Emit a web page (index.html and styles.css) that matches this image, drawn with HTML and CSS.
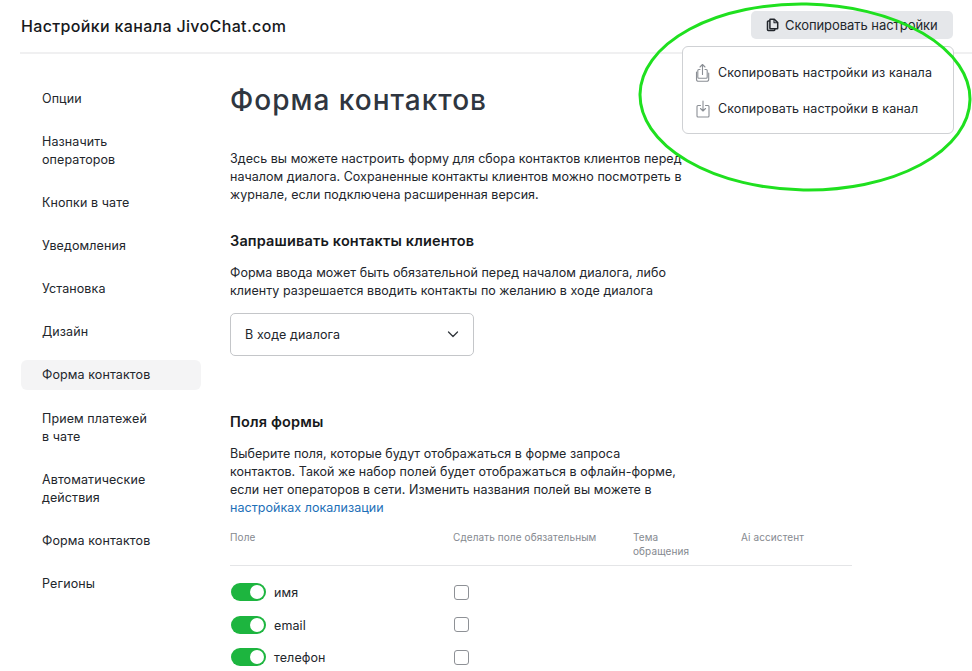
FILE: index.html
```html
<!DOCTYPE html>
<html lang="ru">
    <head>
        <meta charset="utf-8">
        <meta name="viewport" content="width=device-width, initial-scale=1.0">
        <title>Настройки канала</title>
        <link rel="stylesheet" href="styles.css">
    </head>
    <body>
        <div class="page">
            <header class="topbar">
                <div class="channelTitle">Настройки канала JivoChat.com</div>
                <button class="copyBtn" type="button">
                    <svg width="14" height="14" viewBox="0 0 14 14" fill="none" stroke="#22262c" stroke-width="1.5" stroke-linejoin="round">
                        <path d="M4 3H2.2a.7.7 0 0 0-.7.7v8.1c0 .4.3.7.7.7h5.9c.4 0 .7-.3.7-.7V11"/>
                        <path d="M4.5 1.2h3.8l3.4 3.4v5.6a.6.6 0 0 1-.6.6H4.500a.6.6 0 0 1-.6-.6V1.800c0-.3.300-.6.600-.6z"/>
                        <path d="M8 1.500v3.300h3.500" stroke-width="1.100"/>
                    </svg>
                    Скопировать настройки
                </button>
            </header>

            <div class="copyMenu">
                <div class="copyMenuItem">
                    <svg width="16" height="20" viewBox="0 0 16 20" fill="none" stroke="#8b8f95" stroke-width="1.100" stroke-linecap="round" stroke-linejoin="round">
                        <path d="M7.500 11.500V1.500M5 4l2.500-2.500L10 4"/>
                        <path d="M5 6.500H3.800c-.6 0-1 .4-1 1v6.800c0 .6.400 1 1 1h7.400c.6 0 1-.4 1-1V7.500c0-.6-.4-1-1-1H10"/>
                        <path d="M1.500 9v7.200c0 1.200.9 2.100 2.100 2.100h8c1.200 0 2.100-.9 2.100-2.100V10"/>
                    </svg>
                    <span>Скопировать настройки из канала</span>
                </div>
                <div class="copyMenuItem">
                    <svg width="16" height="20" viewBox="0 0 16 20" fill="none" stroke="#8b8f95" stroke-width="1.100" stroke-linecap="round" stroke-linejoin="round">
                        <path d="M8 2v10M5.500 9.500 8 12l2.500-2.500"/>
                        <path d="M5.500 6.500H3c-.6 0-1 .4-1 1V17c0 .6.400 1 1 1h10c.6 0 1-.4 1-1V7.500c0-.6-.4-1-1-1h-2.500"/>
                    </svg>
                    <span>Скопировать настройки в канал</span>
                </div>
            </div>

            <div class="layout">
                <nav class="sideNav">
                    <a class="navItem">Опции</a>
                    <a class="navItem">Назначить<br>операторов</a>
                    <a class="navItem">Кнопки в чате</a>
                    <a class="navItem">Уведомления</a>
                    <a class="navItem">Установка</a>
                    <a class="navItem">Дизайн</a>
                    <a class="navItem navItemActive">Форма контактов</a>
                    <a class="navItem">Прием платежей<br>в чате</a>
                    <a class="navItem">Автоматические<br>действия</a>
                    <a class="navItem">Форма контактов</a>
                    <a class="navItem">Регионы</a>
                </nav>

                <main class="content">
                    <h1>Форма контактов</h1>
                    <p class="intro">Здесь вы можете настроить форму для сбора контактов клиентов перед<br>началом диалога. Сохраненные контакты клиентов можно посмотреть в<br>журнале, если подключена расширенная версия.</p>

                    <h2>Запрашивать контакты клиентов</h2>
                    <p class="hint">Форма ввода может быть обязательной перед началом диалога, либо<br>клиенту разрешается вводить контакты по желанию в ходе диалога</p>
                    <div class="selectBox">
                        <span>В ходе диалога</span>
                        <svg width="12" height="7" viewBox="0 0 12 7" fill="none" stroke="#33373d" stroke-width="1.300" stroke-linecap="round" stroke-linejoin="round"><path d="M1.500 1 6 5.500 10.500 1"/></svg>
                    </div>

                    <h2 class="fieldsTitle">Поля формы</h2>
                    <p class="hint">Выберите поля, которые будут отображаться в форме запроса<br>контактов. Такой же набор полей будет отображаться в офлайн-форме,<br>если нет операторов в сети. Изменить названия полей вы можете в<br><a class="link">настройках локализации</a></p>

                    <div class="fieldsHead">
                        <div>Поле</div>
                        <div>Сделать поле обязательным</div>
                        <div>Тема<br>обращения</div>
                        <div>Ai ассистент</div>
                    </div>
                    <div class="fieldRow">
                        <div class="fieldName"><span class="toggle"></span><span class="fieldLabel">имя</span></div>
                        <span class="checkbox"></span>
                    </div>
                    <div class="fieldRow">
                        <div class="fieldName"><span class="toggle"></span><span class="fieldLabel">email</span></div>
                        <span class="checkbox"></span>
                    </div>
                    <div class="fieldRow">
                        <div class="fieldName"><span class="toggle"></span><span class="fieldLabel">телефон</span></div>
                        <span class="checkbox"></span>
                    </div>
                </main>
            </div>

            <svg class="scribble" width="340" height="200" viewBox="0 0 340 200" fill="none">
                <ellipse cx="173" cy="97" rx="165" ry="93" transform="rotate(1 173 97)" stroke="#1fe01f" stroke-width="3"/>
            </svg>
        </div>
    </body>
</html>
```

FILE: styles.css
```css
*{
    box-sizing: border-box;
}

body{
    margin: 0;
    background: #fff;
    color: #22262c;
    font-family: Inter, "Liberation Sans", sans-serif;
    font-size: 12.5px;
    line-height: 18px;
    letter-spacing: 0.1px;
}

.page{
    position: relative;
    height: 671px;
    overflow: hidden;
}

.topbar{
    display: flex;
    align-items: center;
    justify-content: space-between;
    height: 54px;
    margin-left: 20px;
    padding: 0 19px 2px 1px;
    border-bottom: 2px solid #f0f0f1;
}

.channelTitle{
    padding-top: 2px;
    font-size: 16px;
    font-weight: 500;
    letter-spacing: 0.35px;
    color: #17191c;
}

.copyBtn{
    display: flex;
    align-items: center;
    gap: 5px;
    width: 202px;
    height: 28px;
    padding: 0 0 0 15px;
    border: 0;
    border-radius: 5px;
    background: #e5e7ea;
    color: #22262c;
    font-family: inherit;
    font-size: 13px;
    letter-spacing: -0.05px;
}

.copyMenu{
    position: absolute;
    top: 46px;
    left: 682px;
    width: 272px;
    height: 88px;
    padding: 8px 0 0 12px;
    background: #fff;
    border: 1px solid #cfd1d4;
    border-radius: 6px;
    z-index: 2;
}

.copyMenuItem{
    display: flex;
    align-items: center;
    gap: 7px;
    height: 36px;
}

.layout{
    display: flex;
    padding: 0 0 0 21px;
}

.sideNav{
    display: flex;
    flex-direction: column;
    gap: 13.1px;
    width: 180px;
    padding-top: 29.4px;
    flex-shrink: 0;
}

.navItem{
    padding: 6.6px 0 5.4px 21px;
    border-radius: 6px;
}

.navItemActive{
    background: #f4f4f5;
}

.content{
    width: 622px;
    margin-left: 29px;
}

h1{
    margin: 28px 0 0;
    font-size: 28px;
    line-height: 36px;
    font-weight: 500;
    letter-spacing: 1px;
    color: #2f3640;
}

.intro{
    margin: 32px 0 0;
    letter-spacing: 0.04px;
}

h2{
    margin: 27px 0 0;
    font-size: 14.5px;
    line-height: 20px;
    font-weight: 600;
    letter-spacing: 0.15px;
    color: #17191c;
}

.hint{
    margin: 13px 0 0;
    letter-spacing: 0.04px;
}

.selectBox{
    display: flex;
    align-items: center;
    justify-content: space-between;
    width: 244px;
    height: 43px;
    margin-top: 13px;
    padding: 0 14px;
    border: 1px solid #c4c6c9;
    border-radius: 5px;
}

.fieldsTitle{
    margin-top: 56px;
}

.link{
    color: #1d6fb8;
}

.fieldsHead{
    display: grid;
    grid-template-columns: 223px 180px 108px 1fr;
    height: 39px;
    margin-top: 10px;
    padding-top: 3px;
    border-bottom: 1px solid #e4e5e7;
    color: #85898f;
    font-size: 10px;
    line-height: 14px;
    letter-spacing: 0.1px;
}

.fieldRow{
    display: grid;
    grid-template-columns: 224px 1fr;
    align-items: center;
    height: 32.5px;
}

.fieldsHead + .fieldRow{
    margin-top: 10px;
}

.fieldName{
    display: flex;
    align-items: center;
    gap: 8px;
    padding-left: 1px;
}

.fieldLabel{
    padding-top: 2px;
}

.toggle{
    position: relative;
    width: 35px;
    height: 18px;
    border-radius: 9px;
    background: #1db53f;
}

.toggle::after{
    content: "";
    position: absolute;
    top: 2px;
    right: 2px;
    width: 14px;
    height: 14px;
    border-radius: 50%;
    background: #fff;
}

.checkbox{
    width: 15px;
    height: 15px;
    border: 1px solid #8e9196;
    border-radius: 3px;
}

.scribble{
    position: absolute;
    top: 0;
    left: 632px;
    z-index: 3;
}
```
